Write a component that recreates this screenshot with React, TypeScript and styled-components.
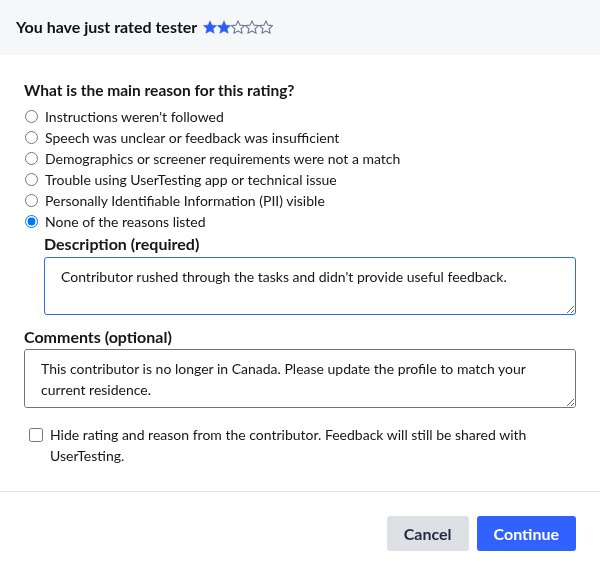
import React, { useState } from 'react';
import styled, { createGlobalStyle } from 'styled-components';

const GlobalStyle = createGlobalStyle`
  html, body {
    margin: 0;
    padding: 0;
    background: #FFFFFF;
  }
  body {
    font-family: Lato, "Liberation Sans", sans-serif;
    color: #161616;
  }
`;

const Modal = styled.div`
  width: 600px;
  background: #FFFFFF;
`;

const Header = styled.div`
  height: 55px;
  box-sizing: border-box;
  padding: 0 16px 2px;
  display: flex;
  align-items: center;
  background: #F6F7F9;
`;

const Title = styled.h1`
  margin: 0;
  font-size: 16px;
  font-weight: 700;
  color: #111111;
  display: flex;
  align-items: center;
  gap: 6px;
`;

const Stars = styled.span`
  display: inline-flex;
`;

const Body = styled.div`
  padding: 25px 24px 25px;
  border-bottom: 1px solid #E2E3E5;
`;

const Question = styled.div`
  font-size: 15.5px;
  font-weight: 700;
  line-height: 20px;
  margin-bottom: 6px;
`;

const OptionList = styled.div`
  display: flex;
  flex-direction: column;
`;

const Option = styled.label`
  display: flex;
  align-items: center;
  height: 21px;
  font-size: 14px;
  cursor: pointer;
`;

const Radio = styled.input`
  width: 13px;
  height: 13px;
  margin: 0 7px 0 1px;
`;

const Indented = styled.div`
  padding-left: 20px;
`;

const FieldLabel = styled.div<{ $gap: number; $after: number }>`
  font-size: 16px;
  font-weight: 700;
  line-height: 20px;
  margin-top: ${(p) => p.$gap}px;
  margin-bottom: ${(p) => p.$after}px;
`;

const TextArea = styled.textarea<{ $focused?: boolean; $height: number }>`
  display: block;
  width: 100%;
  height: ${(p) => p.$height}px;
  box-sizing: border-box;
  padding: 8px 16px;
  border-radius: 3px;
  border: 1px solid ${(p) => (p.$focused ? '#3366F0' : '#6E7380')};
  font-family: inherit;
  font-size: 14px;
  line-height: 21px;
  color: #161616;
  outline: none;
  resize: vertical;
`;

const CheckRow = styled.label`
  display: flex;
  align-items: flex-start;
  margin-top: 16px;
  font-size: 14px;
  line-height: 21px;
  cursor: pointer;
`;

const Checkbox = styled.input`
  width: 14px;
  height: 14px;
  margin: 4px 7px 0 5px;
  flex-shrink: 0;
`;

const Footer = styled.div`
  display: flex;
  justify-content: flex-end;
  gap: 8px;
  padding: 24px;
`;

const Button = styled.button<{ $primary?: boolean }>`
  height: 35px;
  padding: 0 17px;
  border: none;
  border-radius: 3px;
  font-family: inherit;
  font-size: 16px;
  font-weight: 700;
  cursor: pointer;
  background: ${(p) => (p.$primary ? '#3161FF' : '#DDE0E5')};
  color: ${(p) => (p.$primary ? '#FFFFFF' : '#1F2A40')};
`;

const StarIcon: React.FC<{ filled: boolean }> = ({ filled }) => (
  <svg width="14" height="14" viewBox="1.5 2 21 20">
    <path
      d="M12 2.8l2.9 6.4 7 .7-5.3 4.7 1.6 6.9L12 17.9l-6.2 3.6 1.6-6.9L2.1 9.9l7-.7z"
      fill={filled ? '#2F5EF5' : 'none'}
      stroke={filled ? '#2F5EF5' : '#6F7D92'}
      strokeWidth={filled ? 0.8 : 1.7}
      strokeLinejoin="round"
    />
  </svg>
);

const reasons = [
  "Instructions weren't followed",
  'Speech was unclear or feedback was insufficient',
  'Demographics or screener requirements were not a match',
  'Trouble using UserTesting app or technical issue',
  'Personally Identifiable Information (PII) visible',
  'None of the reasons listed',
];

const App: React.FC = () => {
  const [reason, setReason] = useState(5);
  const [description, setDescription] = useState(
    "Contributor rushed through the tasks and didn't provide useful feedback."
  );
  const [comments, setComments] = useState(
    'This contributor is no longer in Canada. Please update the profile to match your current residence.'
  );
  const [hidden, setHidden] = useState(false);

  return (
    <>
      <GlobalStyle />
      <Modal>
        <Header>
          <Title>
            You have just rated tester
            <Stars>
              {[0, 1, 2, 3, 4].map((i) => (
                <StarIcon key={i} filled={i < 2} />
              ))}
            </Stars>
          </Title>
        </Header>
        <Body>
          <Question>What is the main reason for this rating?</Question>
          <OptionList>
            {reasons.map((r, i) => (
              <Option key={r}>
                <Radio
                  type="radio"
                  name="reason"
                  checked={reason === i}
                  onChange={() => setReason(i)}
                />
                {r}
              </Option>
            ))}
          </OptionList>
          <Indented>
            <FieldLabel $gap={2} $after={3}>Description (required)</FieldLabel>
            <TextArea
              $focused
              $height={58}
              value={description}
              onChange={(e) => setDescription(e.target.value)}
            />
          </Indented>
          <FieldLabel $gap={12} $after={2}>Comments (optional)</FieldLabel>
          <TextArea
            $height={59}
            value={comments}
            onChange={(e) => setComments(e.target.value)}
          />
          <CheckRow>
            <Checkbox
              type="checkbox"
              checked={hidden}
              onChange={(e) => setHidden(e.target.checked)}
            />
            Hide rating and reason from the contributor. Feedback will still be shared with UserTesting.
          </CheckRow>
        </Body>
        <Footer>
          <Button type="button">Cancel</Button>
          <Button type="button" $primary>
            Continue
          </Button>
        </Footer>
      </Modal>
    </>
  );
};

export default App;
